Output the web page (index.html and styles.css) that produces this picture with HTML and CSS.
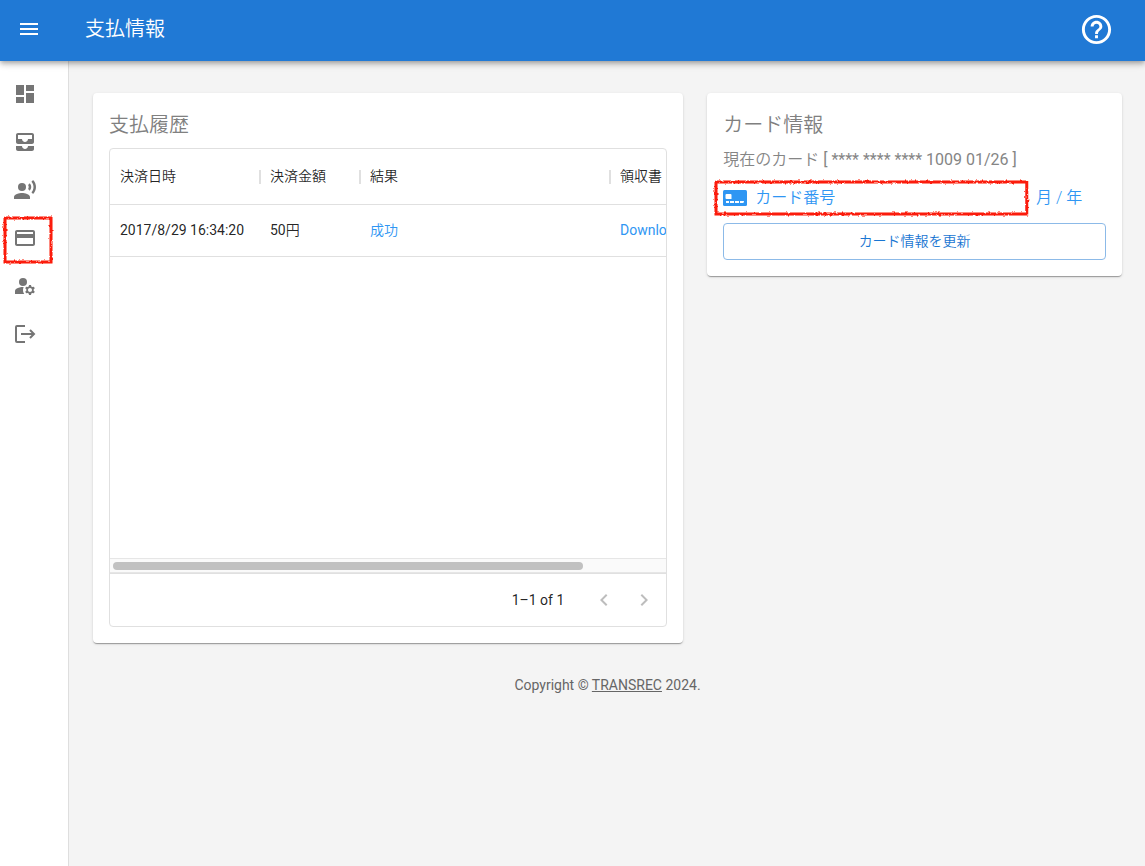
FILE: index.html
```html
<!DOCTYPE html>
<html lang="ja">
<head>
<meta charset="utf-8">
<title>支払情報</title>
<link rel="stylesheet" href="styles.css">
</head>
<body>
<svg class="defs" aria-hidden="true">
  <filter id="rough" x="-5%" y="-20%" width="110%" height="140%">
    <feTurbulence type="fractalNoise" baseFrequency="0.35" numOctaves="2" seed="4"/>
    <feDisplacementMap in="SourceGraphic" scale="3" xChannelSelector="R" yChannelSelector="G"/>
  </filter>
</svg>
<header class="appbar">
  <button class="icon-btn" type="button" aria-label="メニュー">
    <svg class="icon" viewBox="0 0 24 24"><path d="M3 18h18v-2H3v2zm0-5h18v-2H3v2zm0-7v2h18V6H3z"/></svg>
  </button>
  <h1 class="appbar-title">支払情報</h1>
  <button class="icon-btn" type="button" aria-label="ヘルプ">
    <svg class="icon-help" viewBox="0 0 24 24"><path d="M11 18h2v-2h-2v2zm1-16C6.48 2 2 6.48 2 12s4.480 10 10 10 10-4.480 10-10S17.520 2 12 2zm0 18c-4.410 0-8-3.590-8-8s3.590-8 8-8 8 3.590 8 8-3.590 8-8 8zm0-14c-2.210 0-4 1.790-4 4h2c0-1.100.9-2 2-2s2 .9 2 2c0 2-3 1.750-3 5h2c0-2.250 3-2.500 3-5 0-2.210-1.790-4-4-4z"/></svg>
  </button>
</header>
<div class="layout">
  <nav class="sidebar">
    <a class="nav-link" href="#dashboard" aria-label="ダッシュボード"><svg class="icon" viewBox="0 0 24 24"><path d="M3 13h8V3H3v10zm0 8h8v-6H3v6zm10 0h8V11h-8v10zm0-18v6h8V3h-8z"/></svg></a>
    <a class="nav-link" href="#inbox" aria-label="受信箱"><svg class="icon" viewBox="0 0 24 24"><path d="M19 3H5c-1.100 0-2 .9-2 2v7c0 1.100.9 2 2 2h14c1.100 0 2-.9 2-2V5c0-1.100-.9-2-2-2zm0 6h-4c0 1.620-1.380 3-3 3s-3-1.380-3-3H5V5h14v4zm-4 7h6v3c0 1.100-.9 2-2 2H5c-1.100 0-2-.9-2-2v-3h6c0 1.660 1.340 3 3 3s3-1.340 3-3z"/></svg></a>
    <a class="nav-link" href="#voice" aria-label="音声"><svg class="icon" viewBox="0 0 24 24"><circle cx="9" cy="9" r="4"/><path d="M9 15c-2.670 0-8 1.340-8 4v2h16v-2c0-2.660-5.330-4-8-4zm7.760-9.640-1.680 1.690c.84 1.180.84 2.710 0 3.890l1.680 1.690c2.020-2.020 2.020-5.070 0-7.270zM20.070 2l-1.630 1.630c2.770 3.020 2.770 7.560 0 10.740L20.070 16c3.900-3.890 3.910-9.950 0-14z"/></svg></a>
    <a class="nav-link nav-marked" href="#payment" aria-label="支払情報"><svg class="icon" viewBox="0 0 24 24"><path d="M20 4H4c-1.110 0-1.990.89-1.990 2L2 18c0 1.110.89 2 2 2h16c1.110 0 2-.89 2-2V6c0-1.110-.89-2-2-2zm0 14H4v-6h16v6zm0-10H4V6h16v2z"/></svg><svg class="marker marker-nav" aria-hidden="true"><rect width="100%" height="100%"/></svg></a>
    <a class="nav-link" href="#account" aria-label="アカウント設定"><svg class="icon" viewBox="0 0 24 24"><circle cx="10" cy="8" r="4"/><path d="M10.670 13.020c-.22-.01-.44-.02-.67-.02-2.420 0-4.680.67-6.610 1.820-.88.52-1.390 1.500-1.390 2.530V20h9.260c-.79-1.130-1.260-2.510-1.260-4 0-1.070.25-2.070.67-2.980zM20.750 16c0-.22-.03-.42-.06-.63l1.140-1.010-1-1.730-1.450.49c-.32-.27-.68-.48-1.080-.63L18 11h-2l-.3 1.490c-.4.150-.76.36-1.080.63l-1.450-.49-1 1.730 1.140 1.010c-.03.21-.06.41-.06.63s.03.42.06.63l-1.140 1.010 1 1.730 1.450-.49c.32.27.68.48 1.080.63L16 21h2l.3-1.490c.4-.15.76-.36 1.080-.63l1.450.49 1-1.730-1.140-1.010c.03-.21.06-.41.06-.63zM17 18c-1.100 0-2-.9-2-2s.9-2 2-2 2 .9 2 2-.9 2-2 2z"/></svg></a>
    <a class="nav-link" href="#logout" aria-label="ログアウト"><svg class="icon icon-line" viewBox="0 0 24 24"><path d="M12 4H4q-1 0-1 1v14q0 1 1 1h8M8 12h13M17 8l4 4-4 4"/></svg></a>
  </nav>
  <main class="main">
    <div class="cards">
      <section class="card card-history">
        <h2 class="card-title">支払履歴</h2>
        <div class="grid">
          <div class="grid-scroll">
            <table class="table">
              <colgroup><col class="col-date"><col class="col-amount"><col class="col-result"><col class="col-receipt"></colgroup>
              <thead><tr><th>決済日時</th><th>決済金額</th><th>結果</th><th>領収書</th></tr></thead>
              <tbody><tr><td>2017/8/29 16:34:20</td><td>50<span class="cjk-text">円</span></td><td><a class="link cjk" href="#result">成功</a></td><td><a class="link" href="#receipt">Download</a></td></tr></tbody>
            </table>
          </div>
          <div class="scrollbar"><div class="thumb"></div></div>
          <div class="pager">
            <span>1–1 of 1</span>
            <button class="pager-btn" type="button" disabled aria-label="前へ"><svg class="icon" viewBox="0 0 24 24"><path d="M15.410 7.410 14 6l-6 6 6 6 1.410-1.410L10.830 12z"/></svg></button>
            <button class="pager-btn" type="button" disabled aria-label="次へ"><svg class="icon" viewBox="0 0 24 24"><path d="M10 6 8.590 7.410 13.170 12l-4.580 4.590L10 18l6-6z"/></svg></button>
          </div>
        </div>
      </section>
      <section class="card card-info">
        <h2 class="card-title">カード情報</h2>
        <p class="current"><span class="cjk">現在のカード</span> [ **** **** **** 1009 01/26 ]</p>
        <form class="card-form">
          <div class="fields">
            <div class="number-field">
              <svg class="card-icon" viewBox="0 0 24 16" aria-hidden="true"><rect width="24" height="16" rx="1.500"/><path class="chip" d="M3.500 4h4q1 0 1 1v4h-5q-1 0-1-1V5q0-1 1-1zM3 11h3v2H3zM7 11h4v2H7zM12 11h4v2h-4zM17 11h4q0 2-1 2h-3z"/></svg>
              <input class="field" type="text" placeholder="カード番号" aria-label="カード番号">
              <svg class="marker marker-field" aria-hidden="true"><rect width="100%" height="100%"/></svg>
            </div>
            <input class="field field-expiry" type="text" placeholder="月 / 年" aria-label="月 / 年">
          </div>
          <button class="submit" type="button">カード情報を更新</button>
        </form>
      </section>
    </div>
    <footer class="footer">Copyright © <a class="footer-link" href="#transrec">TRANSREC</a> 2024.</footer>
  </main>
</div>
</body>
</html>
```

FILE: styles.css
```css
* { box-sizing: border-box; }
body {
  margin: 0;
  min-height: 100vh;
  display: flex;
  flex-direction: column;
  background: #f4f4f4;
  color: rgba(0, 0, 0, 0.87);
  font: 400 14px/20px Roboto, "Noto Sans CJK JP", sans-serif;
}
h1, h2, p { margin: 0; }
button { font: inherit; cursor: pointer; }
.defs { position: absolute; width: 0; height: 0; }
.icon { display: block; width: 24px; height: 24px; fill: currentColor; }
.icon-line { fill: none; stroke: currentColor; stroke-width: 2; }
.icon-help { display: block; width: 35px; height: 35px; fill: currentColor; }

.appbar {
  position: relative;
  z-index: 1;
  display: flex;
  align-items: center;
  height: 61px;
  padding: 0 31px 3px 17px;
  background: #2079d5;
  color: #fff;
  box-shadow: 0 2px 4px -1px rgba(0, 0, 0, 0.2), 0 4px 5px rgba(0, 0, 0, 0.14), 0 1px 10px rgba(0, 0, 0, 0.12);
}
.icon-btn { padding: 0; border: 0; background: none; color: inherit; }
.appbar-title { flex: 1; padding-left: 44px; font-size: 20px; line-height: 32px; font-weight: 350; }

.layout { flex: 1; display: flex; }
.sidebar {
  flex: none;
  width: 69px;
  padding-top: 9px;
  border-right: 1px solid #dedede;
  background: #fff;
  color: #757575;
}
.nav-link { position: relative; display: block; padding: 12px 13px; color: inherit; }

.marker { position: absolute; overflow: visible; fill: none; stroke: #fb1b0b; stroke-width: 3; filter: url(#rough); pointer-events: none; }
.marker-nav { left: 5px; top: 4px; width: 46px; height: 44px; }
.marker-field { left: -7px; top: 0; width: calc(100% + 8px); height: 32px; }

.main { flex: 1; min-width: 0; padding: 32px 23px 32px 24px; }
.cards { display: grid; grid-template-columns: repeat(12, minmax(0, 1fr)); gap: 24px; align-items: start; }
.card {
  padding: 16px;
  border-radius: 4px;
  background: #fff;
  box-shadow: 0 2px 1px -1px rgba(0, 0, 0, 0.2), 0 1px 1px rgba(0, 0, 0, 0.14), 0 1px 3px rgba(0, 0, 0, 0.12);
}
.card-history { grid-column: span 7; }
.card-info { grid-column: span 5; }
.card-title { color: #808080; font-size: 20px; line-height: 32px; font-weight: 350; }

.grid { margin-top: 7px; border: 1px solid #e0e0e0; border-radius: 4px; overflow: hidden; }
.grid-scroll { height: 409px; overflow: hidden; }
.table { width: 650px; table-layout: fixed; border-collapse: separate; border-spacing: 0; }
.col-date { width: 150px; }
.col-amount { width: 100px; }
.col-result { width: 250px; }
.col-receipt { width: 150px; }
.table th, .table td { padding: 0 10px 2px; border-bottom: 1px solid #e0e0e0; text-align: left; font-weight: 400; }
.table th { position: relative; height: 56px; font-weight: 350; }
.table th:not(:last-child)::after {
  content: "";
  position: absolute;
  right: -1px;
  top: 21px;
  width: 2px;
  height: 14px;
  background: #e0e0e0;
}
.table td { height: 52px; }
.link { color: #2f96f3; text-decoration: none; }
.scrollbar { height: 15px; padding: 3px; border: 1px solid #e6e6e6; border-width: 1px 0; background: #fafafa; }
.thumb { width: 470px; max-width: 100%; height: 8px; border-radius: 4px; background: #c1c1c1; }
.pager { display: flex; align-items: center; justify-content: flex-end; height: 53px; padding-right: 2px; border-top: 1px solid #e0e0e0; }
.pager-btn { padding: 8px; border: 0; background: none; color: #bdbdbd; }
.pager span { margin-right: 20px; }

.current { padding: 7px 0 10px; color: #858585; font-size: 16px; line-height: 24px; }
.cjk, .cjk-text { font-weight: 350; }
.fields { display: flex; gap: 10px; height: 32px; margin-bottom: 9px; }
.number-field { position: relative; flex: 1; min-width: 0; display: flex; align-items: center; gap: 8px; }
.card-icon { flex: none; width: 24px; height: 16px; fill: #2f96f3; }
.card-icon .chip { fill: #fff; }
.field { flex: 1; min-width: 0; padding: 0; border: 0; outline: 0; background: none; color: #2f96f3; font: 350 16px/24px Roboto, "Noto Sans CJK JP", sans-serif; }
.field::placeholder { color: #2f96f3; opacity: 1; }
.field-expiry { flex: none; width: 70px; }
.submit {
  display: block;
  width: 100%;
  height: 37px;
  padding: 0 0 2px;
  border: 1px solid #8cbae8;
  border-radius: 4px;
  background: #fff;
  color: #1976d2;
  font-weight: 350;
}

.footer { padding-top: 32px; color: #666; text-align: center; }
.footer-link { color: inherit; }
```
